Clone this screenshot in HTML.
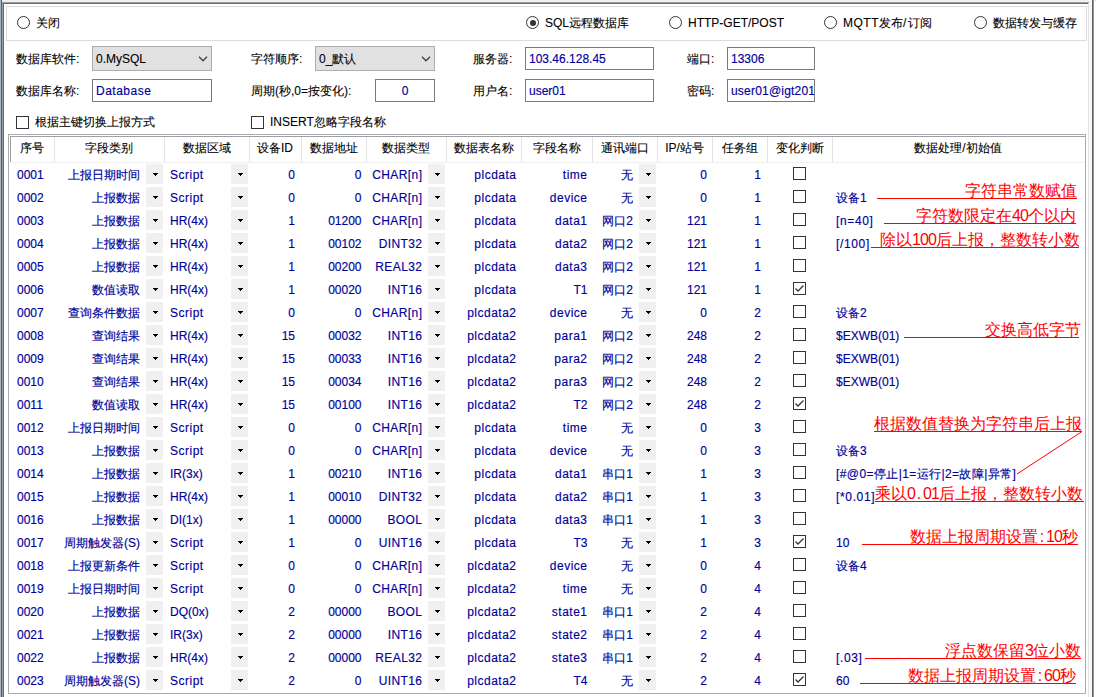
<!DOCTYPE html>
<html><head><meta charset="utf-8"><style>
*{margin:0;padding:0;box-sizing:border-box}
html,body{width:1096px;height:697px;overflow:hidden;background:#fff}
body{position:relative;font-family:"Liberation Sans",sans-serif;font-size:12px;color:#000;-webkit-text-stroke:0.1px currentColor}
.t,.tb{-webkit-text-stroke:0.15px currentColor}
.a{position:absolute}
.t{position:absolute;white-space:nowrap;line-height:23px;height:23px;color:#000098}
.r{text-align:right}
.btn{position:absolute;width:17px;height:20px;background:#f0f0f0}
.btn i{position:absolute;left:7px;top:9px;width:5px;height:1px;background:#000}.btn i::before{content:'';position:absolute;left:1px;top:1px;width:3px;height:1px;background:#000}.btn i::after{content:'';position:absolute;left:2px;top:2px;width:1px;height:1px;background:#000}
.cb{position:absolute;width:13px;height:13px;border:1px solid #333;background:#fff}
.hd{position:absolute;top:136px;height:26px;line-height:24px;text-align:center;white-space:nowrap}
.lbl{position:absolute;white-space:nowrap;line-height:16px}
.tb{position:absolute;border:1px solid #7a7a7a;background:#fff;color:#000098;line-height:22px;padding-left:3px;white-space:nowrap;overflow:hidden}
.cmb{position:absolute;border:1px solid #adadad;background:#e1e1e1;line-height:23px;padding-top:1px;padding-left:3px;white-space:nowrap}
.radio{position:absolute;width:13px;height:13px;border:1px solid #333;border-radius:50%;background:#fff}
.radio.on::after{content:"";position:absolute;left:2.5px;top:2.5px;width:6px;height:6px;border-radius:50%;background:#333}
.an{position:absolute;font-size:16px;line-height:16px;color:#f00;white-space:nowrap;-webkit-text-stroke:0}
.an b{display:inline-block;width:8px;text-align:center;font-weight:normal}
.ul{position:absolute;height:1px;background:#f00}
</style></head><body>

<div class="a" style="left:0;top:0;width:1096px;height:2px;background:#f0f0f0"></div>
<div class="a" style="left:0;top:0;width:1px;height:697px;background:#a8b4c8"></div>
<div class="a" style="left:1px;top:0;width:1px;height:697px;background:#5a5e66"></div>
<div class="a" style="left:2px;top:2px;width:1087px;height:1px;background:#a0a0a0"></div>
<div class="a" style="left:2px;top:2px;width:1px;height:695px;background:#a0a0a0"></div>
<div class="a" style="left:3px;top:3px;width:1085px;height:1px;background:#696969"></div>
<div class="a" style="left:3px;top:3px;width:1px;height:694px;background:#696969"></div>
<div class="a" style="left:1088px;top:3px;width:1px;height:694px;background:#e3e3e3"></div>
<div class="a" style="left:1089px;top:0;width:3px;height:697px;background:#f8f8f8"></div>
<div class="a" style="left:1092px;top:0;width:1px;height:697px;background:#5a5e66"></div>
<div class="a" style="left:1093px;top:0;width:1px;height:697px;background:#8d96a6"></div>
<div class="a" style="left:6px;top:6px;width:1081px;height:35px;border:1px solid #dcdcdc"></div>
<div class="radio" style="left:17px;top:16px"></div>
<div class="lbl" style="left:36px;top:15px">关闭</div>
<div class="radio on" style="left:526px;top:16px"></div>
<div class="lbl" style="left:545px;top:15px">SQL远程数据库</div>
<div class="radio" style="left:669px;top:16px"></div>
<div class="lbl" style="left:688px;top:15px">HTTP-GET/POST</div>
<div class="radio" style="left:824px;top:16px"></div>
<div class="lbl" style="left:843px;top:15px"><span style='letter-spacing:0.5px'>MQTT</span>发布<span style='letter-spacing:1.5px'>/</span>订阅</div>
<div class="radio" style="left:974px;top:16px"></div>
<div class="lbl" style="left:993px;top:15px">数据转发与缓存</div>
<div class="lbl" style="left:16px;top:51px">数据库软件:</div>
<div class="cmb" style="left:92px;top:46px;width:120px;height:25px">0.MySQL</div>
<div class="lbl" style="left:251px;top:51px">字符顺序:</div>
<div class="cmb" style="left:315px;top:46px;width:120px;height:25px">0_默认</div>
<div class="lbl" style="left:473px;top:51px">服务器:</div>
<div class="tb" style="left:525px;top:47px;width:129px;height:23px">103.46.128.45</div>
<div class="lbl" style="left:687px;top:51px">端口:</div>
<div class="tb" style="left:727px;top:47px;width:88px;height:23px">13306</div>
<svg class="a" style="left:198px;top:55px" width="10" height="8" viewBox="0 0 10 8"><path d="M1 1.8 L5 5.8 L9 1.8" fill="none" stroke="#404040" stroke-width="1.3"/></svg>
<svg class="a" style="left:421px;top:55px" width="10" height="8" viewBox="0 0 10 8"><path d="M1 1.8 L5 5.8 L9 1.8" fill="none" stroke="#404040" stroke-width="1.3"/></svg>
<div class="lbl" style="left:16px;top:83px">数据库名称:</div>
<div class="tb" style="left:92px;top:79px;width:120px;height:23px;letter-spacing:0.5px">Database</div>
<div class="lbl" style="left:251px;top:83px">周期(秒,0=按变化):</div>
<div class="tb" style="left:375px;top:79px;width:60px;height:23px;text-align:center;padding-left:0">0</div>
<div class="lbl" style="left:473px;top:83px">用户名:</div>
<div class="tb" style="left:525px;top:79px;width:129px;height:23px">user01</div>
<div class="lbl" style="left:687px;top:83px">密码:</div>
<div class="tb" style="left:727px;top:79px;width:88px;height:23px;letter-spacing:0.2px">user01@igt2019</div>
<div class="cb" style="left:16px;top:116px"></div>
<div class="lbl" style="left:35px;top:114px">根据主键切换上报方式</div>
<div class="cb" style="left:251px;top:116px"></div>
<div class="lbl" style="left:270px;top:114px">INSERT忽略字段名称</div>
<div class="a" style="left:8px;top:134px;width:1078px;height:560px;border:1px solid #a8acb4"></div>
<div class="a" style="left:10px;top:136px;width:1075px;height:1px;background:#a0a0a0"></div>
<div class="a" style="left:10px;top:136px;width:1px;height:26px;background:#a0a0a0"></div>
<div class="a" style="left:10px;top:162px;width:1074px;height:1px;background:#f0f0f0"></div>
<div class="hd" style="left:10px;width:44px">序号</div>
<div class="hd" style="left:54px;width:110px">字段类别</div>
<div class="a" style="left:54px;top:137px;width:1px;height:25px;background:#e3e3e3"></div>
<div class="hd" style="left:164px;width:85px">数据区域</div>
<div class="a" style="left:164px;top:137px;width:1px;height:25px;background:#e3e3e3"></div>
<div class="hd" style="left:249px;width:52px">设备ID</div>
<div class="a" style="left:249px;top:137px;width:1px;height:25px;background:#e3e3e3"></div>
<div class="hd" style="left:301px;width:65px">数据地址</div>
<div class="a" style="left:301px;top:137px;width:1px;height:25px;background:#e3e3e3"></div>
<div class="hd" style="left:366px;width:80px">数据类型</div>
<div class="a" style="left:366px;top:137px;width:1px;height:25px;background:#e3e3e3"></div>
<div class="hd" style="left:446px;width:75px">数据表名称</div>
<div class="a" style="left:446px;top:137px;width:1px;height:25px;background:#e3e3e3"></div>
<div class="hd" style="left:521px;width:71px">字段名称</div>
<div class="a" style="left:521px;top:137px;width:1px;height:25px;background:#e3e3e3"></div>
<div class="hd" style="left:592px;width:65px">通讯端口</div>
<div class="a" style="left:592px;top:137px;width:1px;height:25px;background:#e3e3e3"></div>
<div class="hd" style="left:657px;width:55px">IP/站号</div>
<div class="a" style="left:657px;top:137px;width:1px;height:25px;background:#e3e3e3"></div>
<div class="hd" style="left:712px;width:55px">任务组</div>
<div class="a" style="left:712px;top:137px;width:1px;height:25px;background:#e3e3e3"></div>
<div class="hd" style="left:767px;width:65px">变化判断</div>
<div class="a" style="left:767px;top:137px;width:1px;height:25px;background:#e3e3e3"></div>
<div class="hd" style="left:832px;width:252px">数据处理/初始值</div>
<div class="a" style="left:832px;top:137px;width:1px;height:25px;background:#e3e3e3"></div>
<div class="t" style="left:17px;top:164px">0001</div>
<div class="t r" style="left:54px;width:86px;top:164px">上报日期时间</div>
<div class="btn" style="left:146px;top:164px"><i></i></div>
<div class="t" style="left:170px;top:164px;letter-spacing:0.5px">Script</div>
<div class="btn" style="left:231px;top:164px"><i></i></div>
<div class="t r" style="left:249px;width:46px;top:164px">0</div>
<div class="t r" style="left:301px;width:60.5px;top:164px">0</div>
<div class="t r" style="left:366px;width:56.4px;top:164px;letter-spacing:0.4px">CHAR[n]</div>
<div class="btn" style="left:428px;top:164px"><i></i></div>
<div class="t r" style="left:446px;width:70.5px;top:164px;letter-spacing:0.5px">plcdata</div>
<div class="t r" style="left:521px;width:66.5px;top:164px;letter-spacing:0.5px">time</div>
<div class="t r" style="left:592px;width:41px;top:164px">无</div>
<div class="btn" style="left:639px;top:164px"><i></i></div>
<div class="t r" style="left:657px;width:50px;top:164px">0</div>
<div class="t r" style="left:712px;width:49px;top:164px">1</div>
<div class="cb" style="left:793px;top:167px"></div>
<div class="t" style="left:17px;top:187px">0002</div>
<div class="t r" style="left:54px;width:86px;top:187px">上报数据</div>
<div class="btn" style="left:146px;top:187px"><i></i></div>
<div class="t" style="left:170px;top:187px;letter-spacing:0.5px">Script</div>
<div class="btn" style="left:231px;top:187px"><i></i></div>
<div class="t r" style="left:249px;width:46px;top:187px">0</div>
<div class="t r" style="left:301px;width:60.5px;top:187px">0</div>
<div class="t r" style="left:366px;width:56.4px;top:187px;letter-spacing:0.4px">CHAR[n]</div>
<div class="btn" style="left:428px;top:187px"><i></i></div>
<div class="t r" style="left:446px;width:70.5px;top:187px;letter-spacing:0.5px">plcdata</div>
<div class="t r" style="left:521px;width:66.5px;top:187px;letter-spacing:0.5px">device</div>
<div class="t r" style="left:592px;width:41px;top:187px">无</div>
<div class="btn" style="left:639px;top:187px"><i></i></div>
<div class="t r" style="left:657px;width:50px;top:187px">0</div>
<div class="t r" style="left:712px;width:49px;top:187px">1</div>
<div class="cb" style="left:793px;top:190px"></div>
<div class="t" style="left:836px;top:187px">设备1</div>
<div class="t" style="left:17px;top:210px">0003</div>
<div class="t r" style="left:54px;width:86px;top:210px">上报数据</div>
<div class="btn" style="left:146px;top:210px"><i></i></div>
<div class="t" style="left:170px;top:210px">HR(4x)</div>
<div class="btn" style="left:231px;top:210px"><i></i></div>
<div class="t r" style="left:249px;width:46px;top:210px">1</div>
<div class="t r" style="left:301px;width:60.5px;top:210px">01200</div>
<div class="t r" style="left:366px;width:56.4px;top:210px;letter-spacing:0.4px">CHAR[n]</div>
<div class="btn" style="left:428px;top:210px"><i></i></div>
<div class="t r" style="left:446px;width:70.5px;top:210px;letter-spacing:0.5px">plcdata</div>
<div class="t r" style="left:521px;width:66.5px;top:210px;letter-spacing:0.5px">data1</div>
<div class="t r" style="left:592px;width:41px;top:210px">网口2</div>
<div class="btn" style="left:639px;top:210px"><i></i></div>
<div class="t r" style="left:657px;width:50px;top:210px">121</div>
<div class="t r" style="left:712px;width:49px;top:210px">1</div>
<div class="cb" style="left:793px;top:213px"></div>
<div class="t" style="left:836px;top:210px;letter-spacing:0.65px">[n=40]</div>
<div class="t" style="left:17px;top:233px">0004</div>
<div class="t r" style="left:54px;width:86px;top:233px">上报数据</div>
<div class="btn" style="left:146px;top:233px"><i></i></div>
<div class="t" style="left:170px;top:233px">HR(4x)</div>
<div class="btn" style="left:231px;top:233px"><i></i></div>
<div class="t r" style="left:249px;width:46px;top:233px">1</div>
<div class="t r" style="left:301px;width:60.5px;top:233px">00102</div>
<div class="t r" style="left:366px;width:56.4px;top:233px;letter-spacing:0.4px">DINT32</div>
<div class="btn" style="left:428px;top:233px"><i></i></div>
<div class="t r" style="left:446px;width:70.5px;top:233px;letter-spacing:0.5px">plcdata</div>
<div class="t r" style="left:521px;width:66.5px;top:233px;letter-spacing:0.5px">data2</div>
<div class="t r" style="left:592px;width:41px;top:233px">网口2</div>
<div class="btn" style="left:639px;top:233px"><i></i></div>
<div class="t r" style="left:657px;width:50px;top:233px">121</div>
<div class="t r" style="left:712px;width:49px;top:233px">1</div>
<div class="cb" style="left:793px;top:236px"></div>
<div class="t" style="left:836px;top:233px;letter-spacing:0.65px">[/100]</div>
<div class="t" style="left:17px;top:256px">0005</div>
<div class="t r" style="left:54px;width:86px;top:256px">上报数据</div>
<div class="btn" style="left:146px;top:256px"><i></i></div>
<div class="t" style="left:170px;top:256px">HR(4x)</div>
<div class="btn" style="left:231px;top:256px"><i></i></div>
<div class="t r" style="left:249px;width:46px;top:256px">1</div>
<div class="t r" style="left:301px;width:60.5px;top:256px">00200</div>
<div class="t r" style="left:366px;width:56.4px;top:256px;letter-spacing:0.4px">REAL32</div>
<div class="btn" style="left:428px;top:256px"><i></i></div>
<div class="t r" style="left:446px;width:70.5px;top:256px;letter-spacing:0.5px">plcdata</div>
<div class="t r" style="left:521px;width:66.5px;top:256px;letter-spacing:0.5px">data3</div>
<div class="t r" style="left:592px;width:41px;top:256px">网口2</div>
<div class="btn" style="left:639px;top:256px"><i></i></div>
<div class="t r" style="left:657px;width:50px;top:256px">121</div>
<div class="t r" style="left:712px;width:49px;top:256px">1</div>
<div class="cb" style="left:793px;top:259px"></div>
<div class="t" style="left:17px;top:279px">0006</div>
<div class="t r" style="left:54px;width:86px;top:279px">数值读取</div>
<div class="btn" style="left:146px;top:279px"><i></i></div>
<div class="t" style="left:170px;top:279px">HR(4x)</div>
<div class="btn" style="left:231px;top:279px"><i></i></div>
<div class="t r" style="left:249px;width:46px;top:279px">1</div>
<div class="t r" style="left:301px;width:60.5px;top:279px">00020</div>
<div class="t r" style="left:366px;width:56.4px;top:279px;letter-spacing:0.4px">INT16</div>
<div class="btn" style="left:428px;top:279px"><i></i></div>
<div class="t r" style="left:446px;width:70.5px;top:279px;letter-spacing:0.5px">plcdata</div>
<div class="t r" style="left:521px;width:66.5px;top:279px">T1</div>
<div class="t r" style="left:592px;width:41px;top:279px">网口2</div>
<div class="btn" style="left:639px;top:279px"><i></i></div>
<div class="t r" style="left:657px;width:50px;top:279px">121</div>
<div class="t r" style="left:712px;width:49px;top:279px">1</div>
<div class="cb" style="left:793px;top:282px"></div>
<svg class="a" style="left:793px;top:282px" width="13" height="13" viewBox="0 0 13 13"><path d="M2.5 6.5 L5 9 L10.5 3.5" fill="none" stroke="#333" stroke-width="1.3"/></svg>
<div class="t" style="left:17px;top:302px">0007</div>
<div class="t r" style="left:54px;width:86px;top:302px">查询条件数据</div>
<div class="btn" style="left:146px;top:302px"><i></i></div>
<div class="t" style="left:170px;top:302px;letter-spacing:0.5px">Script</div>
<div class="btn" style="left:231px;top:302px"><i></i></div>
<div class="t r" style="left:249px;width:46px;top:302px">0</div>
<div class="t r" style="left:301px;width:60.5px;top:302px">0</div>
<div class="t r" style="left:366px;width:56.4px;top:302px;letter-spacing:0.4px">CHAR[n]</div>
<div class="btn" style="left:428px;top:302px"><i></i></div>
<div class="t r" style="left:446px;width:70.5px;top:302px;letter-spacing:0.5px">plcdata2</div>
<div class="t r" style="left:521px;width:66.5px;top:302px;letter-spacing:0.5px">device</div>
<div class="t r" style="left:592px;width:41px;top:302px">无</div>
<div class="btn" style="left:639px;top:302px"><i></i></div>
<div class="t r" style="left:657px;width:50px;top:302px">0</div>
<div class="t r" style="left:712px;width:49px;top:302px">2</div>
<div class="cb" style="left:793px;top:305px"></div>
<div class="t" style="left:836px;top:302px">设备2</div>
<div class="t" style="left:17px;top:325px">0008</div>
<div class="t r" style="left:54px;width:86px;top:325px">查询结果</div>
<div class="btn" style="left:146px;top:325px"><i></i></div>
<div class="t" style="left:170px;top:325px">HR(4x)</div>
<div class="btn" style="left:231px;top:325px"><i></i></div>
<div class="t r" style="left:249px;width:46px;top:325px">15</div>
<div class="t r" style="left:301px;width:60.5px;top:325px">00032</div>
<div class="t r" style="left:366px;width:56.4px;top:325px;letter-spacing:0.4px">INT16</div>
<div class="btn" style="left:428px;top:325px"><i></i></div>
<div class="t r" style="left:446px;width:70.5px;top:325px;letter-spacing:0.5px">plcdata2</div>
<div class="t r" style="left:521px;width:66.5px;top:325px;letter-spacing:0.5px">para1</div>
<div class="t r" style="left:592px;width:41px;top:325px">网口2</div>
<div class="btn" style="left:639px;top:325px"><i></i></div>
<div class="t r" style="left:657px;width:50px;top:325px">248</div>
<div class="t r" style="left:712px;width:49px;top:325px">2</div>
<div class="cb" style="left:793px;top:328px"></div>
<div class="t" style="left:836px;top:325px">$EXWB(01)</div>
<div class="t" style="left:17px;top:348px">0009</div>
<div class="t r" style="left:54px;width:86px;top:348px">查询结果</div>
<div class="btn" style="left:146px;top:348px"><i></i></div>
<div class="t" style="left:170px;top:348px">HR(4x)</div>
<div class="btn" style="left:231px;top:348px"><i></i></div>
<div class="t r" style="left:249px;width:46px;top:348px">15</div>
<div class="t r" style="left:301px;width:60.5px;top:348px">00033</div>
<div class="t r" style="left:366px;width:56.4px;top:348px;letter-spacing:0.4px">INT16</div>
<div class="btn" style="left:428px;top:348px"><i></i></div>
<div class="t r" style="left:446px;width:70.5px;top:348px;letter-spacing:0.5px">plcdata2</div>
<div class="t r" style="left:521px;width:66.5px;top:348px;letter-spacing:0.5px">para2</div>
<div class="t r" style="left:592px;width:41px;top:348px">网口2</div>
<div class="btn" style="left:639px;top:348px"><i></i></div>
<div class="t r" style="left:657px;width:50px;top:348px">248</div>
<div class="t r" style="left:712px;width:49px;top:348px">2</div>
<div class="cb" style="left:793px;top:351px"></div>
<div class="t" style="left:836px;top:348px">$EXWB(01)</div>
<div class="t" style="left:17px;top:371px">0010</div>
<div class="t r" style="left:54px;width:86px;top:371px">查询结果</div>
<div class="btn" style="left:146px;top:371px"><i></i></div>
<div class="t" style="left:170px;top:371px">HR(4x)</div>
<div class="btn" style="left:231px;top:371px"><i></i></div>
<div class="t r" style="left:249px;width:46px;top:371px">15</div>
<div class="t r" style="left:301px;width:60.5px;top:371px">00034</div>
<div class="t r" style="left:366px;width:56.4px;top:371px;letter-spacing:0.4px">INT16</div>
<div class="btn" style="left:428px;top:371px"><i></i></div>
<div class="t r" style="left:446px;width:70.5px;top:371px;letter-spacing:0.5px">plcdata2</div>
<div class="t r" style="left:521px;width:66.5px;top:371px;letter-spacing:0.5px">para3</div>
<div class="t r" style="left:592px;width:41px;top:371px">网口2</div>
<div class="btn" style="left:639px;top:371px"><i></i></div>
<div class="t r" style="left:657px;width:50px;top:371px">248</div>
<div class="t r" style="left:712px;width:49px;top:371px">2</div>
<div class="cb" style="left:793px;top:374px"></div>
<div class="t" style="left:836px;top:371px">$EXWB(01)</div>
<div class="t" style="left:17px;top:394px">0011</div>
<div class="t r" style="left:54px;width:86px;top:394px">数值读取</div>
<div class="btn" style="left:146px;top:394px"><i></i></div>
<div class="t" style="left:170px;top:394px">HR(4x)</div>
<div class="btn" style="left:231px;top:394px"><i></i></div>
<div class="t r" style="left:249px;width:46px;top:394px">15</div>
<div class="t r" style="left:301px;width:60.5px;top:394px">00100</div>
<div class="t r" style="left:366px;width:56.4px;top:394px;letter-spacing:0.4px">INT16</div>
<div class="btn" style="left:428px;top:394px"><i></i></div>
<div class="t r" style="left:446px;width:70.5px;top:394px;letter-spacing:0.5px">plcdata2</div>
<div class="t r" style="left:521px;width:66.5px;top:394px">T2</div>
<div class="t r" style="left:592px;width:41px;top:394px">网口2</div>
<div class="btn" style="left:639px;top:394px"><i></i></div>
<div class="t r" style="left:657px;width:50px;top:394px">248</div>
<div class="t r" style="left:712px;width:49px;top:394px">2</div>
<div class="cb" style="left:793px;top:397px"></div>
<svg class="a" style="left:793px;top:397px" width="13" height="13" viewBox="0 0 13 13"><path d="M2.5 6.5 L5 9 L10.5 3.5" fill="none" stroke="#333" stroke-width="1.3"/></svg>
<div class="t" style="left:17px;top:417px">0012</div>
<div class="t r" style="left:54px;width:86px;top:417px">上报日期时间</div>
<div class="btn" style="left:146px;top:417px"><i></i></div>
<div class="t" style="left:170px;top:417px;letter-spacing:0.5px">Script</div>
<div class="btn" style="left:231px;top:417px"><i></i></div>
<div class="t r" style="left:249px;width:46px;top:417px">0</div>
<div class="t r" style="left:301px;width:60.5px;top:417px">0</div>
<div class="t r" style="left:366px;width:56.4px;top:417px;letter-spacing:0.4px">CHAR[n]</div>
<div class="btn" style="left:428px;top:417px"><i></i></div>
<div class="t r" style="left:446px;width:70.5px;top:417px;letter-spacing:0.5px">plcdata</div>
<div class="t r" style="left:521px;width:66.5px;top:417px;letter-spacing:0.5px">time</div>
<div class="t r" style="left:592px;width:41px;top:417px">无</div>
<div class="btn" style="left:639px;top:417px"><i></i></div>
<div class="t r" style="left:657px;width:50px;top:417px">0</div>
<div class="t r" style="left:712px;width:49px;top:417px">3</div>
<div class="cb" style="left:793px;top:420px"></div>
<div class="t" style="left:17px;top:440px">0013</div>
<div class="t r" style="left:54px;width:86px;top:440px">上报数据</div>
<div class="btn" style="left:146px;top:440px"><i></i></div>
<div class="t" style="left:170px;top:440px;letter-spacing:0.5px">Script</div>
<div class="btn" style="left:231px;top:440px"><i></i></div>
<div class="t r" style="left:249px;width:46px;top:440px">0</div>
<div class="t r" style="left:301px;width:60.5px;top:440px">0</div>
<div class="t r" style="left:366px;width:56.4px;top:440px;letter-spacing:0.4px">CHAR[n]</div>
<div class="btn" style="left:428px;top:440px"><i></i></div>
<div class="t r" style="left:446px;width:70.5px;top:440px;letter-spacing:0.5px">plcdata</div>
<div class="t r" style="left:521px;width:66.5px;top:440px;letter-spacing:0.5px">device</div>
<div class="t r" style="left:592px;width:41px;top:440px">无</div>
<div class="btn" style="left:639px;top:440px"><i></i></div>
<div class="t r" style="left:657px;width:50px;top:440px">0</div>
<div class="t r" style="left:712px;width:49px;top:440px">3</div>
<div class="cb" style="left:793px;top:443px"></div>
<div class="t" style="left:836px;top:440px">设备3</div>
<div class="t" style="left:17px;top:463px">0014</div>
<div class="t r" style="left:54px;width:86px;top:463px">上报数据</div>
<div class="btn" style="left:146px;top:463px"><i></i></div>
<div class="t" style="left:170px;top:463px">IR(3x)</div>
<div class="btn" style="left:231px;top:463px"><i></i></div>
<div class="t r" style="left:249px;width:46px;top:463px">1</div>
<div class="t r" style="left:301px;width:60.5px;top:463px">00210</div>
<div class="t r" style="left:366px;width:56.4px;top:463px;letter-spacing:0.4px">INT16</div>
<div class="btn" style="left:428px;top:463px"><i></i></div>
<div class="t r" style="left:446px;width:70.5px;top:463px;letter-spacing:0.5px">plcdata</div>
<div class="t r" style="left:521px;width:66.5px;top:463px;letter-spacing:0.5px">data1</div>
<div class="t r" style="left:592px;width:41px;top:463px">串口1</div>
<div class="btn" style="left:639px;top:463px"><i></i></div>
<div class="t r" style="left:657px;width:50px;top:463px">1</div>
<div class="t r" style="left:712px;width:49px;top:463px">3</div>
<div class="cb" style="left:793px;top:466px"></div>
<div class="t" style="left:836px;top:463px;letter-spacing:0.4px">[#@0=停止|1=运行|2=故障|异常]</div>
<div class="t" style="left:17px;top:486px">0015</div>
<div class="t r" style="left:54px;width:86px;top:486px">上报数据</div>
<div class="btn" style="left:146px;top:486px"><i></i></div>
<div class="t" style="left:170px;top:486px">HR(4x)</div>
<div class="btn" style="left:231px;top:486px"><i></i></div>
<div class="t r" style="left:249px;width:46px;top:486px">1</div>
<div class="t r" style="left:301px;width:60.5px;top:486px">00010</div>
<div class="t r" style="left:366px;width:56.4px;top:486px;letter-spacing:0.4px">DINT32</div>
<div class="btn" style="left:428px;top:486px"><i></i></div>
<div class="t r" style="left:446px;width:70.5px;top:486px;letter-spacing:0.5px">plcdata</div>
<div class="t r" style="left:521px;width:66.5px;top:486px;letter-spacing:0.5px">data2</div>
<div class="t r" style="left:592px;width:41px;top:486px">串口1</div>
<div class="btn" style="left:639px;top:486px"><i></i></div>
<div class="t r" style="left:657px;width:50px;top:486px">1</div>
<div class="t r" style="left:712px;width:49px;top:486px">3</div>
<div class="cb" style="left:793px;top:489px"></div>
<div class="t" style="left:836px;top:486px;letter-spacing:0.65px">[*0.01]</div>
<div class="t" style="left:17px;top:509px">0016</div>
<div class="t r" style="left:54px;width:86px;top:509px">上报数据</div>
<div class="btn" style="left:146px;top:509px"><i></i></div>
<div class="t" style="left:170px;top:509px">DI(1x)</div>
<div class="btn" style="left:231px;top:509px"><i></i></div>
<div class="t r" style="left:249px;width:46px;top:509px">1</div>
<div class="t r" style="left:301px;width:60.5px;top:509px">00000</div>
<div class="t r" style="left:366px;width:56.4px;top:509px;letter-spacing:0.4px">BOOL</div>
<div class="btn" style="left:428px;top:509px"><i></i></div>
<div class="t r" style="left:446px;width:70.5px;top:509px;letter-spacing:0.5px">plcdata</div>
<div class="t r" style="left:521px;width:66.5px;top:509px;letter-spacing:0.5px">data3</div>
<div class="t r" style="left:592px;width:41px;top:509px">串口1</div>
<div class="btn" style="left:639px;top:509px"><i></i></div>
<div class="t r" style="left:657px;width:50px;top:509px">1</div>
<div class="t r" style="left:712px;width:49px;top:509px">3</div>
<div class="cb" style="left:793px;top:512px"></div>
<div class="t" style="left:17px;top:532px">0017</div>
<div class="t r" style="left:54px;width:86px;top:532px">周期触发器(S)</div>
<div class="btn" style="left:146px;top:532px"><i></i></div>
<div class="t" style="left:170px;top:532px;letter-spacing:0.5px">Script</div>
<div class="btn" style="left:231px;top:532px"><i></i></div>
<div class="t r" style="left:249px;width:46px;top:532px">1</div>
<div class="t r" style="left:301px;width:60.5px;top:532px">0</div>
<div class="t r" style="left:366px;width:56.4px;top:532px;letter-spacing:0.4px">UINT16</div>
<div class="btn" style="left:428px;top:532px"><i></i></div>
<div class="t r" style="left:446px;width:70.5px;top:532px;letter-spacing:0.5px">plcdata</div>
<div class="t r" style="left:521px;width:66.5px;top:532px">T3</div>
<div class="t r" style="left:592px;width:41px;top:532px">无</div>
<div class="btn" style="left:639px;top:532px"><i></i></div>
<div class="t r" style="left:657px;width:50px;top:532px">1</div>
<div class="t r" style="left:712px;width:49px;top:532px">3</div>
<div class="cb" style="left:793px;top:535px"></div>
<svg class="a" style="left:793px;top:535px" width="13" height="13" viewBox="0 0 13 13"><path d="M2.5 6.5 L5 9 L10.5 3.5" fill="none" stroke="#333" stroke-width="1.3"/></svg>
<div class="t" style="left:836px;top:532px">10</div>
<div class="t" style="left:17px;top:555px">0018</div>
<div class="t r" style="left:54px;width:86px;top:555px">上报更新条件</div>
<div class="btn" style="left:146px;top:555px"><i></i></div>
<div class="t" style="left:170px;top:555px;letter-spacing:0.5px">Script</div>
<div class="btn" style="left:231px;top:555px"><i></i></div>
<div class="t r" style="left:249px;width:46px;top:555px">0</div>
<div class="t r" style="left:301px;width:60.5px;top:555px">0</div>
<div class="t r" style="left:366px;width:56.4px;top:555px;letter-spacing:0.4px">CHAR[n]</div>
<div class="btn" style="left:428px;top:555px"><i></i></div>
<div class="t r" style="left:446px;width:70.5px;top:555px;letter-spacing:0.5px">plcdata2</div>
<div class="t r" style="left:521px;width:66.5px;top:555px;letter-spacing:0.5px">device</div>
<div class="t r" style="left:592px;width:41px;top:555px">无</div>
<div class="btn" style="left:639px;top:555px"><i></i></div>
<div class="t r" style="left:657px;width:50px;top:555px">0</div>
<div class="t r" style="left:712px;width:49px;top:555px">4</div>
<div class="cb" style="left:793px;top:558px"></div>
<div class="t" style="left:836px;top:555px">设备4</div>
<div class="t" style="left:17px;top:578px">0019</div>
<div class="t r" style="left:54px;width:86px;top:578px">上报日期时间</div>
<div class="btn" style="left:146px;top:578px"><i></i></div>
<div class="t" style="left:170px;top:578px;letter-spacing:0.5px">Script</div>
<div class="btn" style="left:231px;top:578px"><i></i></div>
<div class="t r" style="left:249px;width:46px;top:578px">0</div>
<div class="t r" style="left:301px;width:60.5px;top:578px">0</div>
<div class="t r" style="left:366px;width:56.4px;top:578px;letter-spacing:0.4px">CHAR[n]</div>
<div class="btn" style="left:428px;top:578px"><i></i></div>
<div class="t r" style="left:446px;width:70.5px;top:578px;letter-spacing:0.5px">plcdata2</div>
<div class="t r" style="left:521px;width:66.5px;top:578px;letter-spacing:0.5px">time</div>
<div class="t r" style="left:592px;width:41px;top:578px">无</div>
<div class="btn" style="left:639px;top:578px"><i></i></div>
<div class="t r" style="left:657px;width:50px;top:578px">0</div>
<div class="t r" style="left:712px;width:49px;top:578px">4</div>
<div class="cb" style="left:793px;top:581px"></div>
<div class="t" style="left:17px;top:601px">0020</div>
<div class="t r" style="left:54px;width:86px;top:601px">上报数据</div>
<div class="btn" style="left:146px;top:601px"><i></i></div>
<div class="t" style="left:170px;top:601px">DQ(0x)</div>
<div class="btn" style="left:231px;top:601px"><i></i></div>
<div class="t r" style="left:249px;width:46px;top:601px">2</div>
<div class="t r" style="left:301px;width:60.5px;top:601px">00000</div>
<div class="t r" style="left:366px;width:56.4px;top:601px;letter-spacing:0.4px">BOOL</div>
<div class="btn" style="left:428px;top:601px"><i></i></div>
<div class="t r" style="left:446px;width:70.5px;top:601px;letter-spacing:0.5px">plcdata2</div>
<div class="t r" style="left:521px;width:66.5px;top:601px;letter-spacing:0.5px">state1</div>
<div class="t r" style="left:592px;width:41px;top:601px">串口1</div>
<div class="btn" style="left:639px;top:601px"><i></i></div>
<div class="t r" style="left:657px;width:50px;top:601px">2</div>
<div class="t r" style="left:712px;width:49px;top:601px">4</div>
<div class="cb" style="left:793px;top:604px"></div>
<div class="t" style="left:17px;top:624px">0021</div>
<div class="t r" style="left:54px;width:86px;top:624px">上报数据</div>
<div class="btn" style="left:146px;top:624px"><i></i></div>
<div class="t" style="left:170px;top:624px">IR(3x)</div>
<div class="btn" style="left:231px;top:624px"><i></i></div>
<div class="t r" style="left:249px;width:46px;top:624px">2</div>
<div class="t r" style="left:301px;width:60.5px;top:624px">00000</div>
<div class="t r" style="left:366px;width:56.4px;top:624px;letter-spacing:0.4px">INT16</div>
<div class="btn" style="left:428px;top:624px"><i></i></div>
<div class="t r" style="left:446px;width:70.5px;top:624px;letter-spacing:0.5px">plcdata2</div>
<div class="t r" style="left:521px;width:66.5px;top:624px;letter-spacing:0.5px">state2</div>
<div class="t r" style="left:592px;width:41px;top:624px">串口1</div>
<div class="btn" style="left:639px;top:624px"><i></i></div>
<div class="t r" style="left:657px;width:50px;top:624px">2</div>
<div class="t r" style="left:712px;width:49px;top:624px">4</div>
<div class="cb" style="left:793px;top:627px"></div>
<div class="t" style="left:17px;top:647px">0022</div>
<div class="t r" style="left:54px;width:86px;top:647px">上报数据</div>
<div class="btn" style="left:146px;top:647px"><i></i></div>
<div class="t" style="left:170px;top:647px">HR(4x)</div>
<div class="btn" style="left:231px;top:647px"><i></i></div>
<div class="t r" style="left:249px;width:46px;top:647px">2</div>
<div class="t r" style="left:301px;width:60.5px;top:647px">00000</div>
<div class="t r" style="left:366px;width:56.4px;top:647px;letter-spacing:0.4px">REAL32</div>
<div class="btn" style="left:428px;top:647px"><i></i></div>
<div class="t r" style="left:446px;width:70.5px;top:647px;letter-spacing:0.5px">plcdata2</div>
<div class="t r" style="left:521px;width:66.5px;top:647px;letter-spacing:0.5px">state3</div>
<div class="t r" style="left:592px;width:41px;top:647px">串口1</div>
<div class="btn" style="left:639px;top:647px"><i></i></div>
<div class="t r" style="left:657px;width:50px;top:647px">2</div>
<div class="t r" style="left:712px;width:49px;top:647px">4</div>
<div class="cb" style="left:793px;top:650px"></div>
<div class="t" style="left:836px;top:647px;letter-spacing:0.65px">[.03]</div>
<div class="t" style="left:17px;top:670px">0023</div>
<div class="t r" style="left:54px;width:86px;top:670px">周期触发器(S)</div>
<div class="btn" style="left:146px;top:670px"><i></i></div>
<div class="t" style="left:170px;top:670px;letter-spacing:0.5px">Script</div>
<div class="btn" style="left:231px;top:670px"><i></i></div>
<div class="t r" style="left:249px;width:46px;top:670px">2</div>
<div class="t r" style="left:301px;width:60.5px;top:670px">0</div>
<div class="t r" style="left:366px;width:56.4px;top:670px;letter-spacing:0.4px">UINT16</div>
<div class="btn" style="left:428px;top:670px"><i></i></div>
<div class="t r" style="left:446px;width:70.5px;top:670px;letter-spacing:0.5px">plcdata2</div>
<div class="t r" style="left:521px;width:66.5px;top:670px">T4</div>
<div class="t r" style="left:592px;width:41px;top:670px">无</div>
<div class="btn" style="left:639px;top:670px"><i></i></div>
<div class="t r" style="left:657px;width:50px;top:670px">2</div>
<div class="t r" style="left:712px;width:49px;top:670px">4</div>
<div class="cb" style="left:793px;top:673px"></div>
<svg class="a" style="left:793px;top:673px" width="13" height="13" viewBox="0 0 13 13"><path d="M2.5 6.5 L5 9 L10.5 3.5" fill="none" stroke="#333" stroke-width="1.3"/></svg>
<div class="t" style="left:836px;top:670px">60</div>
<div class="an" style="left:965px;top:183px">字符串常数赋值</div>
<div class="ul" style="left:877px;top:198px;width:200px"></div>
<div class="an" style="left:916px;top:208px">字符数限定在<b>4</b><b>0</b>个以内</div>
<div class="ul" style="left:884px;top:223px;width:192px"></div>
<div class="an" style="left:880px;top:232px">除以<b>1</b><b>0</b><b>0</b>后上报，整数转小数</div>
<div class="ul" style="left:871px;top:247px;width:208px"></div>
<div class="an" style="left:985px;top:322px">交换高低字节</div>
<div class="ul" style="left:904px;top:337px;width:175px"></div>
<div class="an" style="left:874px;top:416px">根据数值替换为字符串后上报</div>
<div class="ul" style="left:874px;top:431px;width:208px"></div>
<div class="an" style="left:875px;top:486px">乘以<b>0</b><b>.</b><b>0</b><b>1</b>后上报，整数转小数</div>
<div class="ul" style="left:875px;top:501px;width:209px"></div>
<div class="an" style="left:910px;top:529px">数据上报周期设置<b>:</b><b>1</b><b>0</b>秒</div>
<div class="ul" style="left:862px;top:544px;width:216px"></div>
<div class="an" style="left:945px;top:643px">浮点数保留<b>3</b>位小数</div>
<div class="ul" style="left:865px;top:658px;width:216px"></div>
<div class="an" style="left:908px;top:668px">数据上报周期设置<b>:</b><b>6</b><b>0</b>秒</div>
<div class="ul" style="left:860px;top:683px;width:216px"></div>
<svg class="a" style="left:0;top:0" width="1096" height="697"><line x1="1082" y1="431.5" x2="1017" y2="474" stroke="#f00" stroke-width="1"/></svg>
</body></html>
